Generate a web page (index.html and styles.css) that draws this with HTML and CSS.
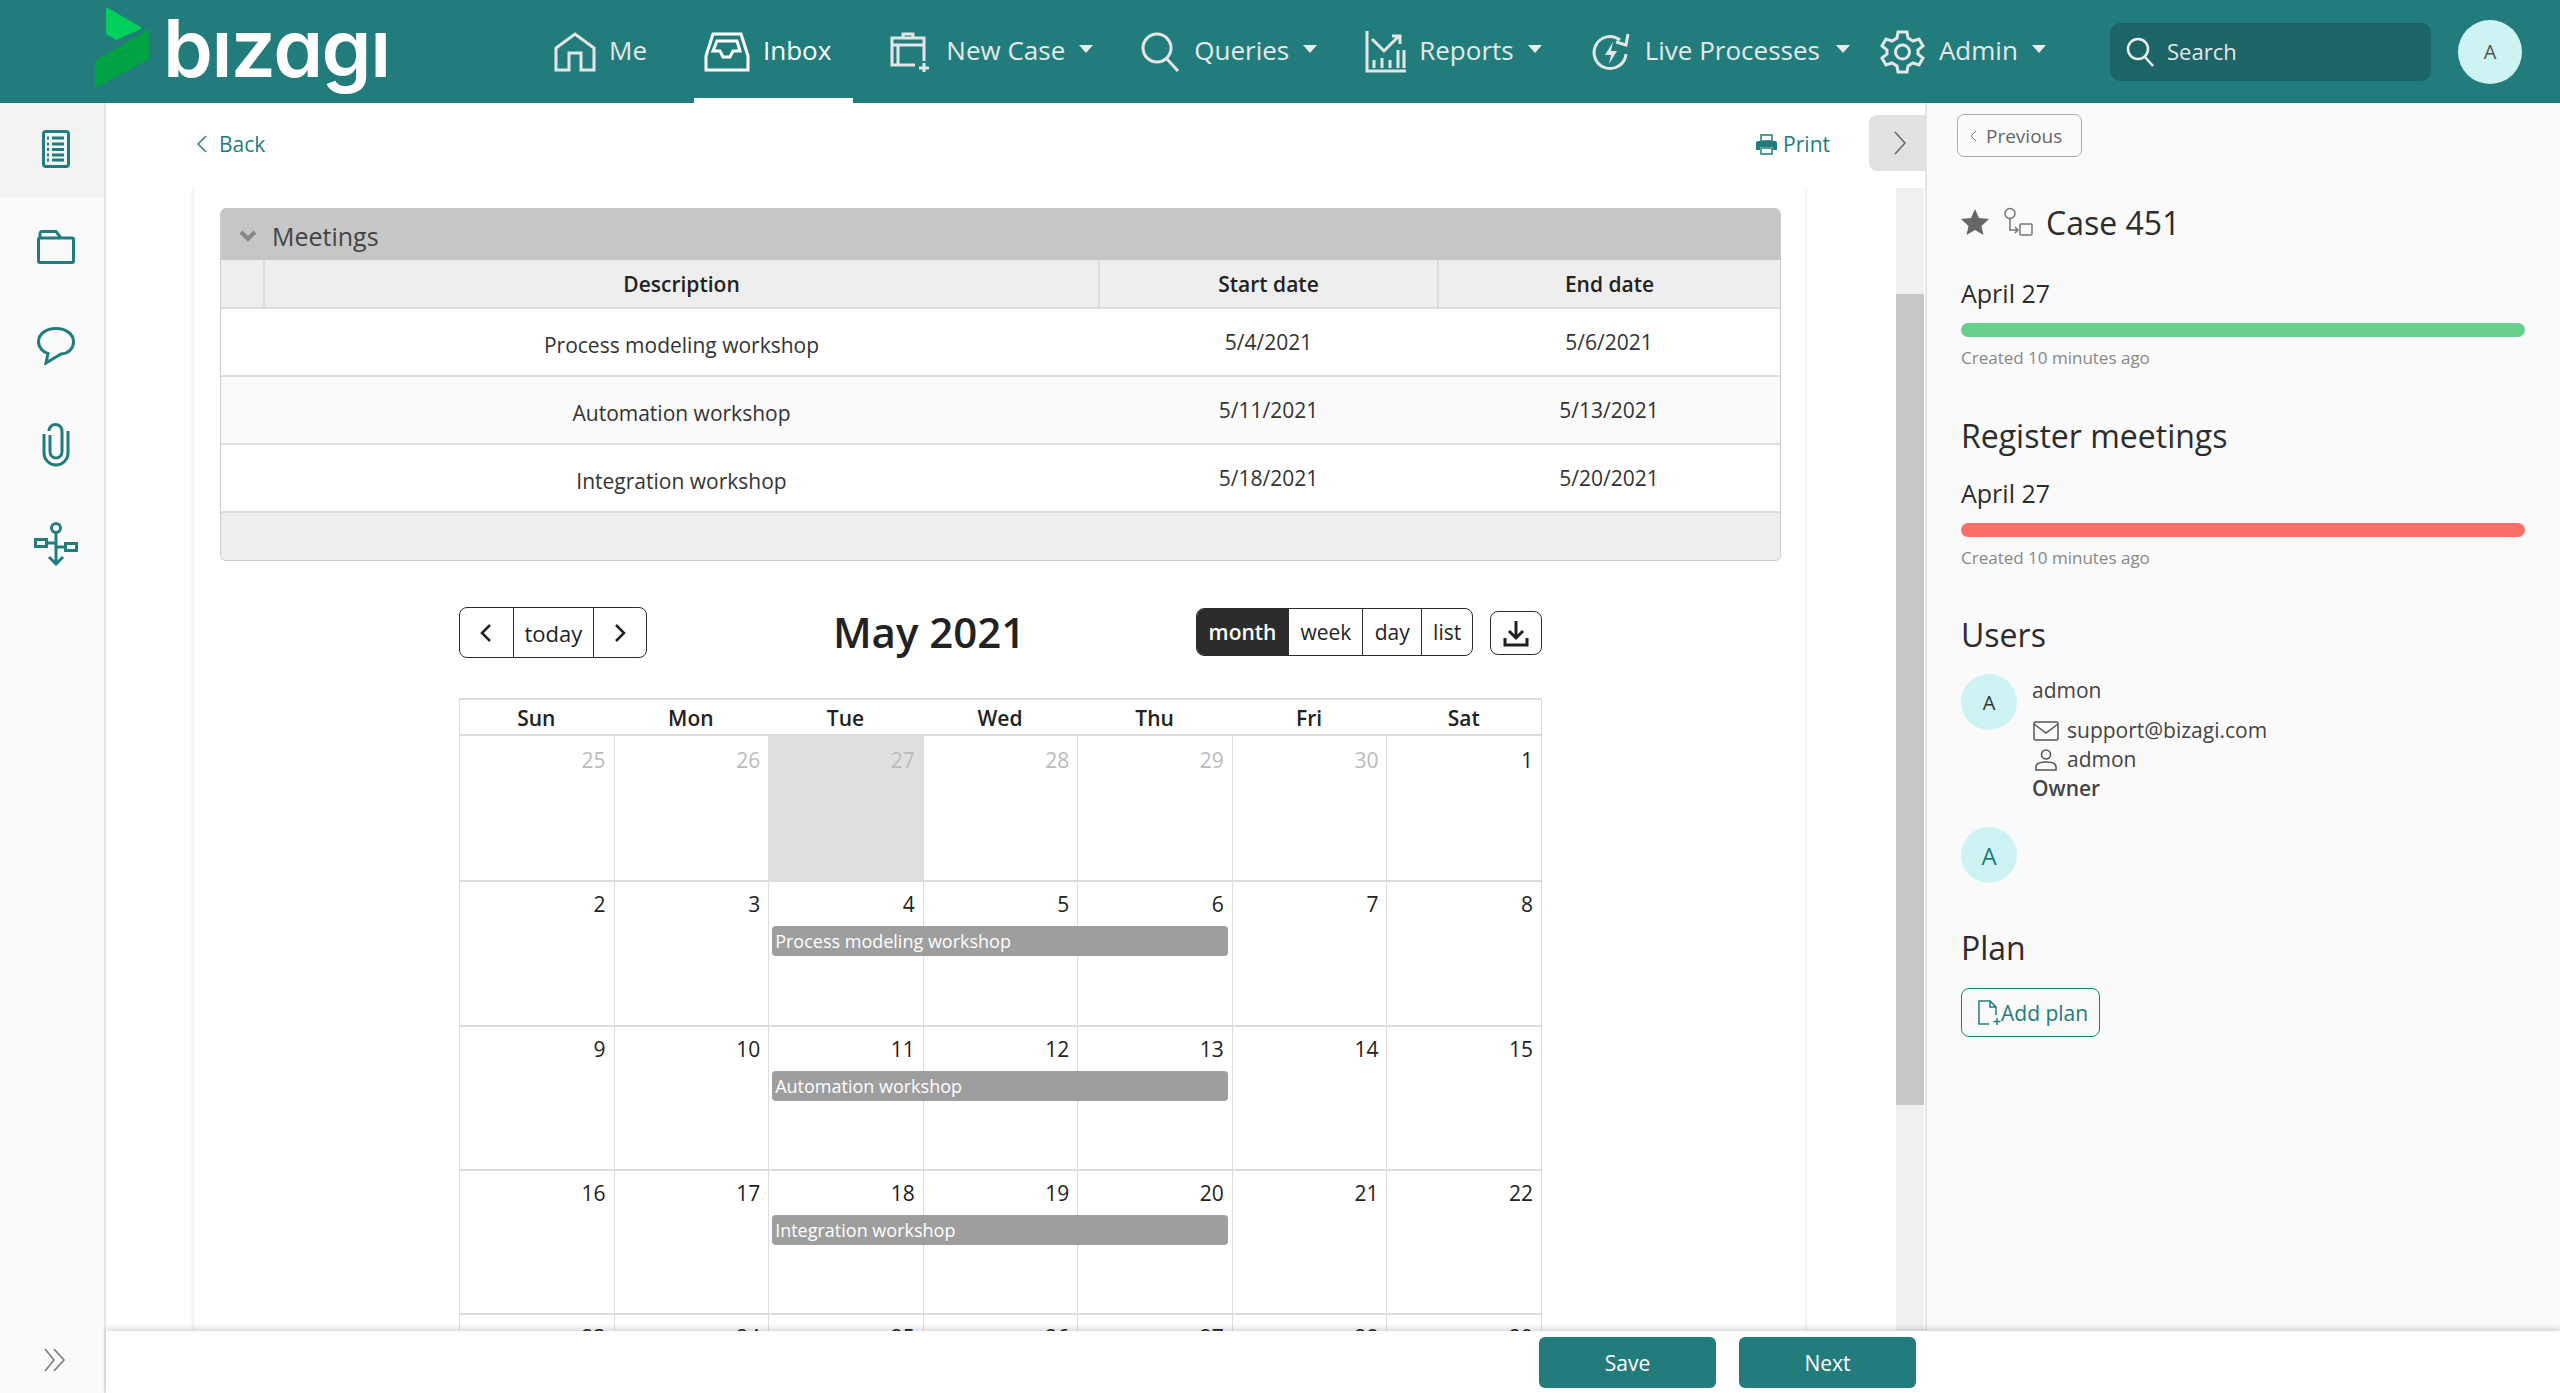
FILE: index.html
```html
<!DOCTYPE html>
<html lang="en">
<head>
    <meta charset="UTF-8">
    <meta name="viewport" content="width=device-width, initial-scale=1.0">
    <title>Case 451</title>
    <link rel="stylesheet" href="styles.css">
</head>
<body>

    <!-- Top bar -->
    <header class="topbar">
        <div class="logo">
            <svg class="logo-mark" width="58" height="82" viewBox="0 0 58 82">
                <polygon points="11,0 46,20 46,22 21,33 11,27" fill="#00cf5c"/>
                <polygon points="0,54 54,22 54,52 0,81" fill="#00a344"/>
            </svg>
            <span class="logo-text">bızagı</span>
        </div>
        <nav class="nav">
            <a class="nav-item nav-me">
                <svg width="42" height="40" viewBox="0 0 42 40"><path d="M2 38V16L21 2l19 14v22H27V21H15v17z"/></svg>
                <span>Me</span>
            </a>
            <a class="nav-item nav-active">
                <svg width="46" height="40" viewBox="0 0 46 40"><path d="M2 38V24L9 2h28l7 22v14zM13 9h20l3 10h-7l-3 6h-7l-3-6h-7z"/></svg>
                <span>Inbox</span>
            </a>
            <a class="nav-item">
                <svg width="44" height="42" viewBox="0 0 44 42"><path d="M26 34H3V7h32v23M3 14h32M9 14v20M14 7V3h10v4M35 32v9M30 37h10"/></svg>
                <span>New Case</span><i class="caret"></i>
            </a>
            <a class="nav-item">
                <svg width="40" height="40" viewBox="0 0 40 40"><circle cx="16" cy="16" r="14"/><path d="M26 27l11 12"/></svg>
                <span>Queries</span><i class="caret"></i>
            </a>
            <a class="nav-item">
                <svg width="41" height="42" viewBox="0 0 41 42"><path d="M2 0v40h39M7 8l12 12L34 5M27 5h8v8M9 37v-8M17 37V27M25 37v-8M33 37V19M39 37V19" /></svg>
                <span>Reports</span><i class="caret"></i>
            </a>
            <a class="nav-item nav-live">
                <svg width="38" height="40" viewBox="0 0 38 40"><path d="M34 22a16 16 0 1 1-6-14M36 2l-2 11-10-3"/><path class="fill" d="M21 10l-8 13h6l-2 9 8-13h-6z"/></svg>
                <span>Live Processes</span><i class="caret"></i>
            </a>
            <a class="nav-item nav-admin">
                <svg width="47" height="44" viewBox="0 0 47 44"><circle cx="23.500" cy="22" r="7"/><path d="M19 2h9l1 6 5 3 6-2 4 7-5 4v4l5 4-4 7-6-2-5 3-1 6h-9l-1-6-5-3-6 2-4-7 5-4v-4l-5-4 4-7 6 2 5-3z"/></svg>
                <span>Admin</span><i class="caret"></i>
            </a>
        </nav>
        <div class="search">
            <svg width="28" height="30" viewBox="0 0 28 30"><circle cx="12" cy="12" r="10"/><path d="M19 20l8 9"/></svg>
            <span>Search</span>
        </div>
        <div class="avatar avatar-top">A</div>
    </header>

    <div class="workspace">
        <!-- Left icons -->
        <aside class="rail">
            <a class="rail-item rail-active">
                <svg width="28" height="38" viewBox="0 0 28 38"><rect x="1.500" y="1.500" width="25" height="35" rx="2.500"/><path d="M10 8h12M10 14h12M10 19.500h12M10 25h12M10 30h12M5 8h2M5 14h2M5 19.500h2M5 25h2M5 30h2"/></svg>
            </a>
            <a class="rail-item">
                <svg width="38" height="34" viewBox="0 0 38 34"><path d="M3 32.500h32a1.500 1.500 0 0 0 1.500-1.500V9.500a1.500 1.500 0 0 0-1.500-1.500H3a1.500 1.500 0 0 0-1.500 1.500V31A1.500 1.500 0 0 0 3 32.500zM3 8V3.500a2 2 0 0 1 2-2h14l5 6.500"/></svg>
            </a>
            <a class="rail-item">
                <svg width="38" height="38" viewBox="0 0 38 38"><path d="M19 1.500c10 0 17.500 5.500 17.500 13 0 7-5 12-12.500 12.500l-15 9 2-9.500C6 25 1.500 20.500 1.500 14.500 1.500 7 9 1.500 19 1.500z"/></svg>
            </a>
            <a class="rail-item">
                <svg width="28" height="44" viewBox="0 0 28 44"><path d="M8 12v17a6 6 0 0 0 12 0V8a6.500 6.500 0 0 0-13 0M2 11v19a12 12 0 0 0 24 0V8"/></svg>
            </a>
            <a class="rail-item">
                <svg width="44" height="44" viewBox="0 0 44 44"><circle cx="22" cy="6" r="4.500"/><rect x="1.500" y="17.500" width="11" height="7"/><rect x="31.500" y="21.500" width="11" height="7"/><path d="M22 11v31M12 21h10M22 25h10M15 35l7 7 7-7"/></svg>
            </a>
            <a class="rail-expand">
                <svg width="24" height="24" viewBox="0 0 24 24"><path d="M2 1l9 11-9 11M11 1l10 11-10 11"/></svg>
            </a>
        </aside>

        <div class="content">
            <div class="content-body">
                <main class="main">
                    <div class="toolbar">
                        <a class="back">
                            <svg width="10" height="18" viewBox="0 0 10 18"><path d="M9 1L1 9l8 8"/></svg>
                            <span>Back</span>
                        </a>
                        <a class="print">
                            <svg width="21" height="21" viewBox="0 0 21 21"><path d="M5 1h11v6H5z" class="outline"/><path d="M2 7h17a2 2 0 0 1 2 2v7h-4v-3H4v3H0V9a2 2 0 0 1 2-2z"/><path d="M5 14h11v6H5z" class="outline"/></svg>
                            <span>Print</span>
                        </a>
                        <button class="panel-toggle">
                            <svg width="12" height="24" viewBox="0 0 12 24"><path d="M1 1l10 11L1 23"/></svg>
                        </button>
                    </div>

                    <div class="scroll-area">
                        <div class="form-card">
                            <!-- Grilla de reuniones -->
                            <section class="meetings">
                                <div class="meetings-title">
                                    <svg width="18" height="12" viewBox="0 0 18 12"><path d="M2 2l7 7 7-7"/></svg>
                                    <span>Meetings</span>
                                </div>
                                <table class="meetings-table">
                                    <thead>
                                        <tr>
                                            <th class="col-blank"></th>
                                            <th class="col-desc">Description</th>
                                            <th class="col-start">Start date</th>
                                            <th>End date</th>
                                        </tr>
                                    </thead>
                                    <tbody>
                                        <tr>
                                            <td></td>
                                            <td class="cell-desc">Process modeling workshop</td>
                                            <td>5/4/2021</td>
                                            <td>5/6/2021</td>
                                        </tr>
                                        <tr>
                                            <td></td>
                                            <td class="cell-desc">Automation workshop</td>
                                            <td>5/11/2021</td>
                                            <td>5/13/2021</td>
                                        </tr>
                                        <tr>
                                            <td></td>
                                            <td class="cell-desc">Integration workshop</td>
                                            <td>5/18/2021</td>
                                            <td>5/20/2021</td>
                                        </tr>
                                    </tbody>
                                </table>
                                <div class="meetings-foot"></div>
                            </section>

                            <!-- Calendario -->
                            <section class="calendar">
                                <div class="cal-toolbar">
                                    <div class="btn-group">
                                        <button class="cal-btn cal-arrow"><svg width="12" height="20" viewBox="0 0 12 20"><path d="M10 2l-8 8 8 8"/></svg></button>
                                        <button class="cal-btn cal-today">today</button>
                                        <button class="cal-btn cal-arrow"><svg width="12" height="20" viewBox="0 0 12 20"><path d="M2 2l8 8-8 8"/></svg></button>
                                    </div>
                                    <h2 class="cal-title">May 2021</h2>
                                    <div class="btn-group btn-group-views">
                                        <button class="cal-btn cal-month">month</button>
                                        <button class="cal-btn cal-week">week</button>
                                        <button class="cal-btn cal-day">day</button>
                                        <button class="cal-btn cal-list">list</button>
                                    </div>
                                    <button class="cal-download"><svg width="26" height="28" viewBox="0 0 26 28"><path d="M13 2v16M6 12l7 7 7-7"/><path d="M2 19v7h22v-7"/></svg></button>
                                </div>

                                <div class="cal-grid">
                                    <div class="cal-head">
                                        <div>Sun</div><div>Mon</div><div>Tue</div><div>Wed</div><div>Thu</div><div>Fri</div><div>Sat</div>
                                    </div>
                                    <div class="cal-week-row">
                                        <div class="cal-day-cell muted">25</div><div class="cal-day-cell muted">26</div><div class="cal-day-cell muted today">27</div><div class="cal-day-cell muted">28</div><div class="cal-day-cell muted">29</div><div class="cal-day-cell muted">30</div><div class="cal-day-cell">1</div>
                                    </div>
                                    <div class="cal-week-row">
                                        <div class="cal-day-cell">2</div><div class="cal-day-cell">3</div><div class="cal-day-cell">4</div><div class="cal-day-cell">5</div><div class="cal-day-cell">6</div><div class="cal-day-cell">7</div><div class="cal-day-cell">8</div>
                                        <div class="cal-event">Process modeling workshop</div>
                                    </div>
                                    <div class="cal-week-row">
                                        <div class="cal-day-cell">9</div><div class="cal-day-cell">10</div><div class="cal-day-cell">11</div><div class="cal-day-cell">12</div><div class="cal-day-cell">13</div><div class="cal-day-cell">14</div><div class="cal-day-cell">15</div>
                                        <div class="cal-event">Automation workshop</div>
                                    </div>
                                    <div class="cal-week-row">
                                        <div class="cal-day-cell">16</div><div class="cal-day-cell">17</div><div class="cal-day-cell">18</div><div class="cal-day-cell">19</div><div class="cal-day-cell">20</div><div class="cal-day-cell">21</div><div class="cal-day-cell">22</div>
                                        <div class="cal-event">Integration workshop</div>
                                    </div>
                                    <div class="cal-week-row">
                                        <div class="cal-day-cell">23</div><div class="cal-day-cell">24</div><div class="cal-day-cell">25</div><div class="cal-day-cell">26</div><div class="cal-day-cell">27</div><div class="cal-day-cell">28</div><div class="cal-day-cell">29</div>
                                    </div>
                                </div>
                            </section>
                        </div>
                        <div class="scrollbar"><div class="scrollbar-thumb"></div></div>
                    </div>
                </main>

                <!-- Panel derecho -->
                <aside class="summary">
                    <button class="previous">
                        <svg width="7" height="12" viewBox="0 0 7 12"><path d="M6 1L1 6l5 5"/></svg>
                        <span>Previous</span>
                    </button>
                    <div class="case-title">
                        <svg class="star" width="28" height="26" viewBox="0 0 28 26"><path d="M14 0l4 9 10 1-7.500 7 2 9L14 21l-8.500 5 2-9L0 10l10-1z"/></svg>
                        <svg class="case-icon" width="30" height="30" viewBox="0 0 30 30"><circle cx="7" cy="6.500" r="5"/><rect x="17" y="17" width="12" height="11" rx="1"/><path d="M7 12v11h8M12 20l3 3-3 3"/></svg>
                        <span>Case 451</span>
                    </div>
                    <div class="date-label">April 27</div>
                    <div class="bar bar-green"></div>
                    <div class="created">Created 10 minutes ago</div>

                    <h3 class="summary-heading heading-register">Register meetings</h3>
                    <div class="date-label date-register">April 27</div>
                    <div class="bar bar-red"></div>
                    <div class="created">Created 10 minutes ago</div>

                    <h3 class="summary-heading heading-users">Users</h3>
                    <div class="user">
                        <div class="avatar">A</div>
                        <div class="user-info">
                            <div class="user-name">admon</div>
                            <div class="user-line">
                                <svg width="26" height="20" viewBox="0 0 26 20"><rect x="1" y="1" width="24" height="18" rx="1.500"/><path d="M1 3l12 9 12-9"/></svg>
                                <span>support@bizagi.com</span>
                            </div>
                            <div class="user-line">
                                <svg width="26" height="22" viewBox="0 0 26 22"><circle cx="13" cy="5.500" r="4.500"/><path d="M3 21v-3c0-3 3-5 10-5s10 2 10 5v3z"/></svg>
                                <span>admon</span>
                            </div>
                            <div class="user-role">Owner</div>
                        </div>
                    </div>
                    <div class="avatar avatar-teal">A</div>

                    <h3 class="summary-heading heading-plan">Plan</h3>
                    <button class="add-plan">
                        <svg width="24" height="26" viewBox="0 0 24 26"><path d="M12 24H2V1h11l6 6v8M13 1v6h6M20 18v7M16.500 21.500h7"/></svg>
                        <span>Add plan</span>
                    </button>
                </aside>
            </div>

            <footer class="footer">
                <button class="footer-btn">Save</button>
                <button class="footer-btn">Next</button>
            </footer>
        </div>
    </div>

</body>
</html>
```
FILE: styles.css
```css
/* General */
* {
    box-sizing: border-box;
    margin: 0;
    padding: 0;
    font-family: "Open Sans", sans-serif;
}

html, body {
    height: 100%;
    overflow: hidden;
}

body {
    display: flex;
    flex-direction: column;
    color: #333;
    background-color: #fff;
}

button {
    background: none;
    border: none;
}

svg {
    display: block;
    flex-shrink: 0;
    fill: none;
}

/* Top bar */
.topbar {
    display: flex;
    align-items: center;
    height: 103px;
    flex-shrink: 0;
    background-color: #237c7c;
}

.logo {
    display: flex;
    align-items: flex-start;
    width: 554px;
    height: 103px;
    padding: 7px 0 0 95px;
}

.logo-text {
    margin: -7px 0 0 10px;
    font-family: Inter, sans-serif;
    font-feature-settings: "cv11";
    font-size: 80px;
    font-weight: 600;
    line-height: 96px;
    letter-spacing: -1.500px;
    color: #fff;
}

.nav {
    display: flex;
    align-items: center;
    gap: 48px;
    height: 103px;
    width: 1556px;
}

.nav-item {
    display: flex;
    align-items: center;
    gap: 13px;
    height: 103px;
    font-size: 26px;
    color: #e4e9e9;
}

.nav-item span {
    margin-bottom: 3px;
}

.nav-item svg {
    stroke: #e2e6e6;
    stroke-width: 3;
}

.nav-item svg .fill {
    fill: #e2e6e6;
    stroke: none;
}

.nav-me {
    margin-right: -1px;
}

.nav-active {
    height: 103px;
    padding: 0 22px 0 10px;
    margin-right: -12px;
    color: #fff;
    border-bottom: 5px solid #fff;
    border-top: 5px solid transparent;
}

.nav-active svg {
    stroke: #fff;
}

.nav-live {
    gap: 15px;
    margin-left: 2px;
}

.nav-admin {
    margin-left: -19px;
}

.caret {
    width: 0;
    height: 0;
    margin-left: 1px;
    border-left: 7px solid transparent;
    border-right: 7px solid transparent;
    border-top: 8px solid #e8ecec;
    margin-bottom: 5px;
}

.search {
    display: flex;
    align-items: center;
    gap: 13px;
    width: 321px;
    height: 58px;
    padding: 0 16px;
    border-radius: 10px;
    background-color: #1c6466;
    font-size: 22px;
    color: #e4e9e9;
}

.search span {
    margin-bottom: 2px;
}

.search svg {
    stroke: #e8eeee;
    stroke-width: 2.500;
}

.avatar {
    display: flex;
    align-items: center;
    justify-content: center;
    flex-shrink: 0;
    width: 56px;
    height: 56px;
    border-radius: 50%;
    background-color: #cef3f3;
    font-size: 20px;
    color: #333;
}

.avatar-top {
    width: 64px;
    height: 64px;
    margin-left: 27px;
    font-size: 20px;
    color: #555;
}

.avatar-teal {
    margin-top: 24px;
    font-size: 24px;
    color: #237c7c;
}

/* Layout */
.workspace {
    display: flex;
    flex: 1;
    min-height: 0;
}

.rail {
    display: flex;
    flex-direction: column;
    width: 106px;
    flex-shrink: 0;
    background-color: #fafafa;
    border-right: 2px solid #e4e4e4;
}

.rail-item {
    display: flex;
    align-items: center;
    justify-content: center;
    height: 99px;
    padding-left: 8px;
}

.rail-item svg {
    stroke: #237c7c;
    stroke-width: 3;
}

.rail-active {
    height: 94px;
    padding-bottom: 3px;
    background-color: #f1f3f3;
}

.rail-expand {
    display: flex;
    justify-content: center;
    margin-top: auto;
    padding: 0 0 21px 6px;
}

.rail-expand svg {
    stroke: #777;
    stroke-width: 1.500;
}

.content {
    display: flex;
    flex-direction: column;
    flex: 1;
    min-width: 0;
}

.content-body {
    display: flex;
    flex: 1;
    min-height: 0;
}

.main {
    display: flex;
    flex-direction: column;
    flex: 1;
    min-width: 0;
}

/* Back and print */
.toolbar {
    display: flex;
    align-items: center;
    height: 85px;
    flex-shrink: 0;
    padding-left: 91px;
    font-size: 21px;
    color: #237c7c;
}

.toolbar svg {
    stroke: #237c7c;
    stroke-width: 1.500;
}

.back {
    display: flex;
    align-items: center;
    gap: 12px;
    margin-bottom: 3px;
}

.print {
    display: flex;
    align-items: center;
    gap: 6px;
    margin-left: auto;
    margin-right: 39px;
    margin-bottom: 3px;
}

.print svg {
    fill: #237c7c;
    stroke: none;
}

.print svg .outline {
    fill: #fff;
    stroke: #237c7c;
    stroke-width: 1.500;
}

.panel-toggle {
    display: flex;
    align-items: center;
    justify-content: center;
    width: 56px;
    height: 56px;
    margin-top: -5px;
    padding-left: 6px;
    border-radius: 8px 0 0 8px;
    background-color: #e2e2e2;
}

.panel-toggle svg {
    stroke: #666;
}

.scroll-area {
    display: flex;
    flex: 1;
    min-height: 0;
    overflow: hidden;
    padding-left: 88px;
}

.form-card {
    width: 1611px;
    padding: 20px 24px 0 26px;
    box-shadow: 0 0 4px rgba(0, 0, 0, 0.14);
    clip-path: inset(0 -6px 0 -6px);
}

.scrollbar {
    width: 28px;
    margin-left: 91px;
    padding-top: 106px;
    background-color: #f0f0f0;
}

.scrollbar-thumb {
    height: 811px;
    background-color: #c8c8c8;
}

/* Meetings grid */
.meetings {
    border: 1px solid #ccc;
    border-top: none;
    border-radius: 6px;
    overflow: hidden;
}

.meetings-title {
    display: flex;
    align-items: center;
    gap: 15px;
    height: 52px;
    padding: 4px 0 0 18px;
    background-color: #c6c6c6;
    font-size: 25px;
    color: #444;
}

.meetings-title svg {
    stroke: #888;
    stroke-width: 4;
}

.meetings-table {
    width: 100%;
    border-collapse: collapse;
    table-layout: fixed;
    font-size: 21px;
}

.meetings-table th {
    height: 48px;
    background-color: #eee;
    border-left: 2px solid #ddd;
    border-bottom: 2px solid #ddd;
    font-weight: 600;
    color: #222;
}

.meetings-table th:first-child {
    border-left: none;
}

.col-blank {
    width: 43px;
}

.col-desc {
    width: 835px;
}

.col-start {
    width: 339px;
}

.meetings-table td {
    height: 68px;
    text-align: center;
    border-bottom: 2px solid #ddd;
    color: #333;
}

.meetings-table td.cell-desc {
    padding-top: 6px;
}

.meetings-table tr:nth-child(2) td {
    background-color: #fafafa;
}

.meetings-foot {
    height: 47px;
    background-color: #eee;
}

/* Calendar */
.calendar {
    width: 1083px;
    margin: 46px 0 0 239px;
}

.cal-toolbar {
    display: flex;
    align-items: center;
    height: 51px;
    margin-bottom: 40px;
}

.btn-group {
    display: flex;
    height: 51px;
    border: 1.500px solid #2c2c2c;
    border-radius: 8px;
    overflow: hidden;
}

.cal-btn {
    display: flex;
    align-items: center;
    justify-content: center;
    border-left: 1px solid #2c2c2c;
    font-size: 21px;
    font-weight: 500;
    color: #222;
}

.cal-btn:first-child {
    border-left: none;
}

.cal-btn svg {
    stroke: #222;
    stroke-width: 2.500;
}

.cal-arrow {
    width: 53px;
}

.cal-today {
    width: 80px;
    font-size: 22px;
}

.cal-title {
    width: 550px;
    margin-bottom: 3px;
    padding-left: 16px;
    text-align: center;
    font-size: 42px;
    font-weight: 600;
    color: #222;
}

.btn-group-views {
    height: 48px;
    margin-bottom: 1px;
}

.cal-month {
    width: 92px;
    background-color: #2c2c2c;
    font-weight: 600;
    color: #fff;
}

.cal-week {
    width: 74px;
}

.cal-day {
    width: 59px;
}

.cal-list {
    width: 51px;
}

.cal-download {
    display: flex;
    align-items: center;
    justify-content: center;
    width: 52px;
    height: 44px;
    margin-left: 17px;
    border: 1.500px solid #2c2c2c;
    border-radius: 8px;
}

.cal-download svg {
    stroke: #222;
    stroke-width: 3;
}

.cal-grid {
    border-left: 1px solid #ddd;
    border-right: 1px solid #ddd;
}

.cal-head {
    display: grid;
    grid-template-columns: repeat(7, 1fr);
    height: 38px;
    margin-left: -1px;
    padding-top: 2px;
    border-top: 2px solid #ddd;
    border-bottom: 2px solid #ddd;
    font-size: 21px;
    font-weight: 600;
    color: #222;
}

.cal-head div {
    display: flex;
    align-items: center;
    justify-content: center;
}

.cal-week-row {
    display: grid;
    grid-template-columns: repeat(7, 1fr);
    grid-template-rows: 144.330px;
    margin-left: -1px;
    margin-bottom: -2px;
    border-bottom: 2px solid #ddd;
}

.cal-day-cell {
    grid-row: 1;
    padding: 10px 8px 0 0;
    border-left: 1px solid #ddd;
    text-align: right;
    font-size: 21px;
    color: #222;
}

.cal-day-cell:first-child {
    border-left: none;
}

.cal-day-cell:nth-child(1) { grid-column: 1; }
.cal-day-cell:nth-child(2) { grid-column: 2; }
.cal-day-cell:nth-child(3) { grid-column: 3; }
.cal-day-cell:nth-child(4) { grid-column: 4; }
.cal-day-cell:nth-child(5) { grid-column: 5; }
.cal-day-cell:nth-child(6) { grid-column: 6; }
.cal-day-cell:nth-child(7) { grid-column: 7; }

.cal-day-cell.muted {
    color: #bbb;
}

.cal-day-cell.today {
    background-color: #dfdfdf;
}

.cal-event {
    grid-row: 1;
    grid-column: 3 / 6;
    align-self: start;
    height: 30px;
    margin: 46px 4px 0 4px;
    padding-left: 3px;
    border-radius: 4px;
    background-color: #9e9e9e;
    font-size: 18px;
    line-height: 30px;
    color: #fff;
}

/* Right panel */
.summary {
    width: 635px;
    flex-shrink: 0;
    padding: 11px 35px 0 34px;
    background-color: #fafafa;
    border-left: 2px solid #e4e4e4;
}

.previous {
    display: flex;
    align-items: center;
    gap: 9px;
    width: 125px;
    height: 43px;
    margin-left: -4px;
    padding-left: 12px;
    border: 1px solid #aaa;
    border-radius: 7px;
    font-size: 19px;
    color: #666;
}

.previous svg {
    stroke: #777;
}

.case-title {
    display: flex;
    align-items: center;
    height: 40px;
    margin-top: 45px;
    font-size: 32px;
    color: #2c2c2c;
}

.star {
    fill: #666;
}

.case-icon {
    margin-left: 14px;
    margin-right: 13px;
    stroke: #777;
    stroke-width: 1.500;
}

.date-label {
    margin-top: 35px;
    font-size: 25px;
    line-height: 33px;
    color: #2c2c2c;
}

.date-register {
    margin-top: 19px;
}

.bar {
    height: 14px;
    margin-top: 13px;
    border-radius: 7px;
}

.bar-green {
    background-color: #65d18c;
}

.bar-red {
    background-color: #fb6f69;
}

.created {
    margin-top: 10px;
    font-size: 17px;
    line-height: 22px;
    color: #888;
}

.summary-heading {
    font-size: 32px;
    font-weight: 400;
    line-height: 44px;
    color: #2c2c2c;
}

.heading-register {
    margin-top: 45px;
}

.heading-users {
    margin-top: 44px;
}

.heading-plan {
    margin-top: 43px;
}

.user {
    display: flex;
    gap: 15px;
    margin-top: 17px;
}

.user-info {
    margin-top: 2px;
    font-size: 21px;
    line-height: 29px;
    color: #444;
}

.user-name {
    margin-bottom: 11px;
}

.user-line {
    display: flex;
    align-items: center;
    gap: 8px;
    margin-left: 1px;
}

.user-line svg {
    stroke: #555;
    stroke-width: 1.500;
}

.user-role {
    font-weight: 600;
}

.add-plan {
    display: flex;
    align-items: center;
    width: 139px;
    height: 49px;
    margin-top: 18px;
    padding-left: 15px;
    border: 1.500px solid #237c7c;
    border-radius: 8px;
    font-size: 21px;
    color: #237c7c;
}

.add-plan svg {
    stroke: #237c7c;
    stroke-width: 1.500;
}

/* Footer */
.footer {
    position: relative;
    display: flex;
    justify-content: flex-end;
    gap: 23px;
    height: 62px;
    flex-shrink: 0;
    padding: 6px 644px 0 0;
    background-color: #fff;
    box-shadow: 0 -3px 5px rgba(0, 0, 0, 0.14);
}

.footer-btn {
    width: 177px;
    height: 51px;
    border-radius: 6px;
    background-color: #237c7c;
    font-size: 21px;
    color: #fff;
}
```
